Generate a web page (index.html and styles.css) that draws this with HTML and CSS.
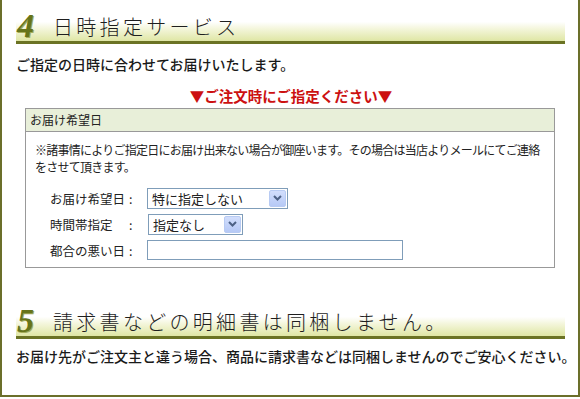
FILE: index.html
```html
<!DOCTYPE html>
<html lang="ja">
<head>
    <meta charset="UTF-8">
    <title>日時指定サービス</title>
    <link rel="stylesheet" href="styles.css">
</head>
<body>
    <div class="frame">
        <h2 class="sec-title"><span class="num">4</span><span class="title-text">日時指定サービス</span></h2>
        <p class="lead">ご指定の日時に合わせてお届けいたします。</p>

        <p class="notice">▼ご注文時にご指定ください▼</p>

        <div class="box">
            <div class="box-head">お届け希望日</div>
            <div class="box-body">
                <p class="note">※諸事情によりご指定日にお届け出来ない場合が御座います。その場合は当店よりメールにてご連絡<br>をさせて頂きます。</p>

                <div class="form">
                    <div class="row">
                        <span class="label">お届け希望日</span><span class="colon">:</span>
                        <div class="select select-day">
                            <span class="value">特に指定しない</span>
                            <span class="arrow"><svg width="9" height="6" viewBox="0 0 9 6"><path d="M1 1 L4.5 4.5 L8 1" fill="none" stroke="#4d6185" stroke-width="2"/></svg></span>
                        </div>
                    </div>
                    <div class="row">
                        <span class="label">時間帯指定</span><span class="colon">:</span>
                        <div class="select select-time">
                            <span class="value">指定なし</span>
                            <span class="arrow"><svg width="9" height="6" viewBox="0 0 9 6"><path d="M1 1 L4.5 4.5 L8 1" fill="none" stroke="#4d6185" stroke-width="2"/></svg></span>
                        </div>
                    </div>
                    <div class="row">
                        <span class="label">都合の悪い日</span><span class="colon">:</span>
                        <input type="text" class="text-input">
                    </div>
                </div>
            </div>
        </div>

        <h2 class="sec-title sec-title-5"><span class="num">5</span><span class="title-text">請求書などの明細書は同梱しません。</span></h2>
        <p class="lead lead-5">お届け先がご注文主と違う場合、商品に請求書などは同梱しませんのでご安心ください。</p>
    </div>
</body>
</html>
```

FILE: styles.css
```css
body {
    margin: 0;
    background: #fff;
    font-family: "Noto Sans CJK JP", "Liberation Sans", sans-serif;
    color: #222;
}

.frame {
    width: 576px;
    height: 395px;
    border-left: 2px solid #6b6f2a;
    border-right: 2px solid #6b6f2a;
    border-bottom: 2px solid #6b6f2a;
    overflow: hidden;
}

/* section banners */
.sec-title {
    display: flex;
    align-items: flex-end;
    margin: 10px 0 0 14px;
    width: 549px;
    height: 31px;
    border-bottom: 3px solid #6b7324;
    background: linear-gradient(to bottom, #fff 0%, #fff 38%, #f4f6dc 60%, #dfe6a4 100%);
    font-weight: normal;
}

.sec-title .num {
    font-family: "Liberation Serif", serif;
    font-style: italic;
    font-weight: bold;
    font-size: 34px;
    line-height: 31px;
    color: #66741a;
    width: 36px;
    padding-left: 1px;
    text-shadow: 1px 1px 0 #a5ad5a;
}

.sec-title .title-text {
    font-size: 20px;
    line-height: 28px;
    letter-spacing: 3.3px;
    color: #1e1e1e;
    font-weight: 300;
}

.sec-title-5 {
    margin-top: 37px;
}

.lead {
    margin: 10px 0 0 14px;
    font-size: 14px;
    line-height: 20px;
    font-weight: 500;
    color: #1a1a1a;
}

.lead-5 {
    margin-top: 7px;
}

.notice {
    margin: 12px 0 0;
    text-align: center;
    font-size: 14.5px;
    line-height: 20px;
    font-weight: bold;
    color: #cc1111;
    padding-left: 2px;
}

/* form box */
.box {
    margin: 2px 0 0 23px;
    width: 528px;
    border: 1px solid #999;
}

.box-head {
    height: 22px;
    line-height: 22px;
    padding-left: 4px;
    font-size: 12px;
    background: #e8efd9;
    border-bottom: 1px solid #999;
}

.box-body {
    padding: 9px 10px 7px 9px;
}

.note {
    margin: 0;
    font-size: 12px;
    line-height: 17px;
    letter-spacing: -0.75px;
    white-space: nowrap;
}

.form {
    margin-top: 13px;
    padding-left: 15px;
    display: flex;
    flex-direction: column;
    gap: 6px;
}

.row {
    display: flex;
    align-items: center;
    height: 20px;
    font-size: 12.5px;
}

.label {
    width: 79px;
}

.colon {
    width: 18px;
}

.select {
    display: flex;
    align-items: center;
    justify-content: space-between;
    height: 19px;
    border: 1px solid #7f9db9;
    background: #fff;
    font-size: 13px;
}

.select .value {
    padding-left: 4px;
}

.select .arrow {
    display: flex;
    align-items: center;
    justify-content: center;
    width: 15px;
    height: 15px;
    margin-right: 1px;
    border: 1px solid #b8cbf3;
    border-radius: 2px;
    background: linear-gradient(to bottom, #d2defc, #b6c9f6);
}

.select-day {
    width: 139px;
}

.select-time {
    width: 93px;
    margin-left: 1px;
}

.text-input {
    width: 254px;
    height: 18px;
    padding: 0;
    border: 1px solid #7f9db9;
    background: #fff;
}
```
